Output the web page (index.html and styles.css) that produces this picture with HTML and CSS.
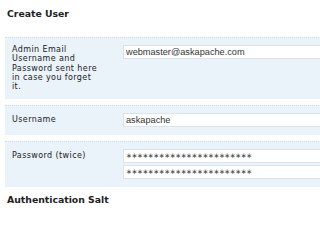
FILE: index.html
```html
<!DOCTYPE html>
<html lang="en">
<head>
<meta charset="utf-8">
<title>Create User</title>
<link rel="stylesheet" href="styles.css">
</head>
<body>
<div class="page">
  <h3 class="section-title">Create User</h3>
  <div class="rows">
    <div class="row">
      <div class="label">Admin Email Username and Password sent here in case you forget it.</div>
      <div class="field">
        <input class="text-input" type="text" value="webmaster@askapache.com">
      </div>
    </div>
    <div class="row">
      <div class="label label--inline">Username</div>
      <div class="field">
        <input class="text-input" type="text" value="askapache">
      </div>
    </div>
    <div class="row">
      <div class="label label--inline">Password (twice)</div>
      <div class="field">
        <input class="text-input text-input--masked" type="text" value="∗∗∗∗∗∗∗∗∗∗∗∗∗∗∗∗∗∗∗∗∗∗∗">
        <input class="text-input text-input--masked" type="text" value="∗∗∗∗∗∗∗∗∗∗∗∗∗∗∗∗∗∗∗∗∗∗∗">
      </div>
    </div>
  </div>
  <h3 class="section-title section-title--next">Authentication Salt</h3>
</div>
</body>
</html>
```

FILE: styles.css
```css
html, body {
  margin: 0;
  padding: 0;
  background: #ffffff;
  overflow: hidden;
}

.page {
  width: 440px;
  padding: 8px 0 0 5px;
  font-family: "DejaVu Sans", Verdana, sans-serif;
  color: #222222;
}

.section-title {
  margin: 0 0 17px 2px;
  font-size: 9.3px;
  line-height: 12px;
  font-weight: bold;
  color: #222222;
}

.section-title--next {
  margin-top: 7px;
}

.rows {
  display: flex;
  flex-direction: column;
  gap: 6px;
}

.row {
  display: grid;
  grid-template-columns: 90px 1fr;
  column-gap: 21px;
  align-items: start;
  padding: 7px 0 8px 7px;
  background: #eaf2fa;
  border-top: 1px dotted #cfdbe8;
}

.label {
  font-size: 8px;
  line-height: 9.3px;
  letter-spacing: 0.4px;
  color: #222222;
}

.label--inline {
  padding-top: 2px;
}

.field {
  display: flex;
  flex-direction: column;
  gap: 2px;
}

.text-input {
  box-sizing: border-box;
  width: 260px;
  height: 14px;
  margin: 0;
  padding: 0 0 0 2px;
  border: 1px solid #dde3ea;
  background: #ffffff;
  font-family: "Liberation Sans", Arial, sans-serif;
  font-size: 9.2px;
  color: #333333;
  outline: none;
}

.text-input--masked {
  font-family: "DejaVu Sans", sans-serif;
  font-size: 7px;
  letter-spacing: -0.4px;
  color: #444444;
}
```
